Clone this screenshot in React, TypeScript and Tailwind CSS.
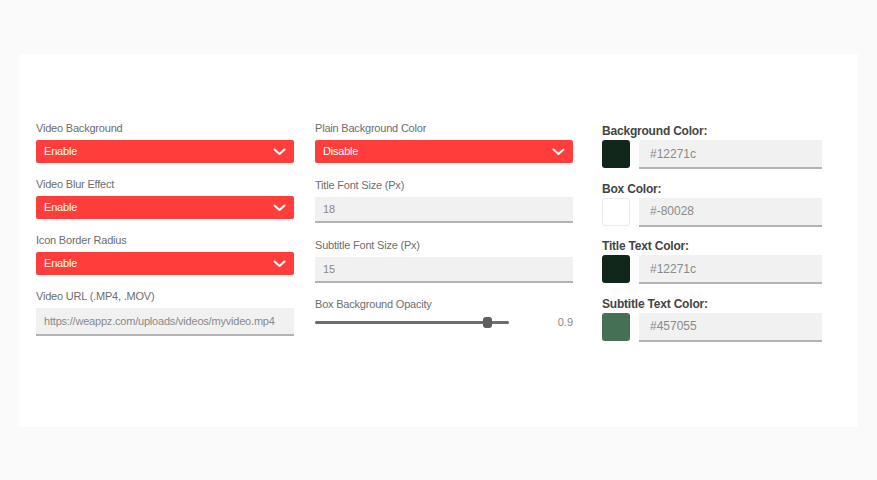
import React from "react";

const font = { fontFamily: '"Liberation Sans", Arial, sans-serif' };

function Chevron() {
  return (
    <svg width="13" height="8" viewBox="0 0 13 8" fill="none">
      <polyline points="1.5,1.5 6.5,6 11.5,1.5" stroke="#ffffff" strokeWidth="2" strokeLinecap="round" strokeLinejoin="round" />
    </svg>
  );
}

function Label({ children }: { children: React.ReactNode }) {
  return <div className="text-[11px] leading-[14px] text-[#6e6e6e] tracking-[-0.2px]">{children}</div>;
}

function SelectBox({ value }: { value: string }) {
  return (
    <div className="mt-[5px] h-[23px] w-full rounded-[2px] bg-[#ff3d3a] flex items-center justify-between pl-[8px] pr-[8px]">
      <span className="text-[11px] text-white tracking-[-0.2px]">{value}</span>
      <Chevron />
    </div>
  );
}

function TextBox({ value, h }: { value: string; h: string }) {
  return (
    <div className={`mt-[5px] ${h} w-full bg-[#f1f1f1] border-b-2 border-[#b3b3b3] flex items-center pl-[8px]`}>
      <span className="text-[11px] text-[#8a8a8a] tracking-[-0.2px]">{value}</span>
    </div>
  );
}

function ColorRow({ label, color, value, light }: { label: string; color: string; value: string; light?: boolean }) {
  return (
    <div>
      <div className="text-[12px] leading-[14px] font-bold text-[#444] tracking-[-0.2px]">{label}</div>
      <div className="mt-[2px] flex items-start gap-[9px]">
        <div
          className={`w-[28px] h-[28px] rounded-[3px] ${light ? "border border-[#ececec]" : ""}`}
          style={{ backgroundColor: color }}
        />
        <div className="w-[183px] h-[29px] bg-[#f1f1f1] border-b-2 border-[#b3b3b3] flex items-center pl-[11px]">
          <span className="text-[12px] text-[#8a8a8a]">{value}</span>
        </div>
      </div>
    </div>
  );
}

export default function App() {
  return (
    <div className="w-[877px] h-[480px] bg-[#fafafa] pt-[54px] pl-[19px]" style={font}>
      <div className="w-[839px] h-[373px] bg-white flex pl-[17px] pt-[67px]">
        {/* first column */}
        <div className="w-[258px] flex flex-col gap-[14px]">
          <div>
            <Label>Video Background</Label>
            <SelectBox value="Enable" />
          </div>
          <div>
            <Label>Video Blur Effect</Label>
            <SelectBox value="Enable" />
          </div>
          <div>
            <Label>Icon Border Radius</Label>
            <SelectBox value="Enable" />
          </div>
          <div>
            <Label>Video URL (.MP4, .MOV)</Label>
            <TextBox value="https://weappz.com/uploads/videos/myvideo.mp4" h="h-[28px]" />
          </div>
        </div>

        {/* second column */}
        <div className="w-[258px] ml-[21px] flex flex-col gap-[15px]">
          <div>
            <Label>Plain Background Color</Label>
            <SelectBox value="Disable" />
          </div>
          <div>
            <Label>Title Font Size (Px)</Label>
            <TextBox value="18" h="h-[26px]" />
          </div>
          <div>
            <Label>Subtitle Font Size (Px)</Label>
            <TextBox value="15" h="h-[26px]" />
          </div>
          <div className="-mt-[1px]">
            <Label>Box Background Opacity</Label>
            <div className="mt-[4px] h-[14px] flex items-center justify-between">
              <div className="relative w-[194px] h-[3px] bg-[#6d6d6d] rounded-full">
                <div className="absolute left-[168px] -top-[4px] w-[9px] h-[11px] rounded-[3px] bg-[#5e5e5e]" />
              </div>
              <span className="text-[11px] text-[#888]">0.9</span>
            </div>
          </div>
        </div>

        {/* third column */}
        <div className="w-[221px] ml-[29px] mt-[3px] flex flex-col gap-[12.5px]">
          <ColorRow label="Background Color:" color="#12271c" value="#12271c" />
          <ColorRow label="Box Color:" color="#ffffff" value="#-80028" light />
          <ColorRow label="Title Text Color:" color="#12271c" value="#12271c" />
          <ColorRow label="Subtitle Text Color:" color="#457055" value="#457055" />
        </div>
      </div>
    </div>
  );
}
